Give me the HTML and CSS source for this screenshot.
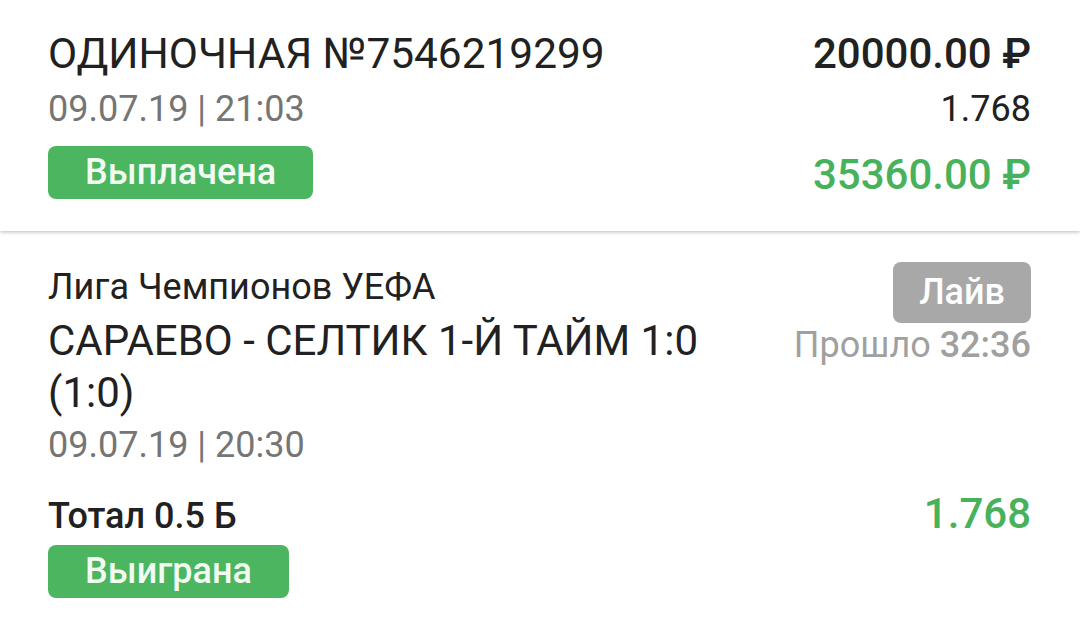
FILE: index.html
```html
<!DOCTYPE html>
<html lang="ru">
<head>
    <meta charset="UTF-8">
    <meta name="viewport" content="width=device-width, initial-scale=1.0">
    <title>Ставка №7546219299</title>
    <link rel="stylesheet" href="styles.css">
</head>
<body>
    <div class="bet-card">
        <div class="bet-main">
            <div class="bet-title">ОДИНОЧНАЯ №7546219299</div>
            <div class="bet-date">09.07.19 | 21:03</div>
            <span class="badge badge-green">Выплачена</span>
        </div>
        <div class="bet-sums">
            <div class="bet-stake">20000.00 ₽</div>
            <div class="bet-coef">1.768</div>
            <div class="bet-win">35360.00 ₽</div>
        </div>
    </div>

    <div class="event">
        <div class="event-row">
            <div class="event-info">
                <div class="event-league">Лига Чемпионов УЕФА</div>
                <div class="event-name">САРАЕВО - СЕЛТИК 1-Й ТАЙМ 1:0 (1:0)</div>
                <div class="event-date">09.07.19 | 20:30</div>
            </div>
            <div class="event-status">
                <span class="badge badge-gray">Лайв</span>
                <div class="event-time">Прошло <b>32:36</b></div>
            </div>
        </div>
        <div class="pick-row">
            <div class="pick-name">Тотал 0.5 Б</div>
            <div class="pick-coef">1.768</div>
        </div>
        <span class="badge badge-green badge-small">Выиграна</span>
    </div>
</body>
</html>
```

FILE: styles.css
```css
body {
    font-family: Roboto, 'Noto Sans', sans-serif;
    margin: 0;
    padding: 0;
    background-color: #fff;
    color: #212121;
}
.bet-card {
    display: flex;
    justify-content: space-between;
    padding: 27px 49px 29px 48px;
    background-color: #fff;
    box-shadow: 0 1px 4px rgba(0,0,0,0.28);
    position: relative;
}
.bet-title {
    font-size: 42.4px;
    line-height: 54px;
}
.bet-date {
    font-size: 36px;
    line-height: 56px;
    color: #757575;
}
.badge {
    display: inline-block;
    font-size: 36px;
    font-weight: 500;
    border-radius: 8px;
}
.badge-green {
    background-color: #4bb55f;
    color: #f2fbf2;
    height: 53px;
    line-height: 53px;
    padding: 0 37px;
    margin-top: 9px;
}
.badge-gray {
    background-color: #a8a8a8;
    color: #fff;
    height: 61px;
    line-height: 61px;
    padding: 0 26px;
}
.bet-sums {
    text-align: right;
}
.bet-stake {
    font-size: 42px;
    line-height: 54px;
    font-weight: 500;
}
.bet-coef {
    font-size: 36px;
    line-height: 56px;
}
.bet-win {
    font-size: 42px;
    line-height: 54px;
    font-weight: 500;
    color: #48b15c;
    margin-top: 11px;
}
.event {
    padding: 31px 49px 0 48px;
}
.event-row {
    display: flex;
    justify-content: space-between;
    gap: 24px;
}
.event-league {
    font-size: 36px;
    line-height: 50px;
    margin-bottom: 3px;
}
.event-name {
    font-size: 42px;
    line-height: 52px;
}
.event-date {
    font-size: 36px;
    line-height: 52px;
    color: #757575;
}
.event-status {
    display: flex;
    flex-direction: column;
    align-items: flex-end;
    flex-shrink: 0;
}
.event-time {
    font-size: 36px;
    line-height: 44px;
    color: #a0a0a0;
    white-space: nowrap;
}
.event-time b {
    font-weight: 500;
}
.pick-row {
    display: flex;
    justify-content: space-between;
    align-items: baseline;
    margin-top: 18px;
}
.pick-name {
    font-size: 36px;
    font-weight: 500;
}
.pick-coef {
    font-size: 42px;
    line-height: 50px;
    font-weight: 500;
    color: #48b15c;
}
.badge-small {
    margin-top: 6px;
}
```
